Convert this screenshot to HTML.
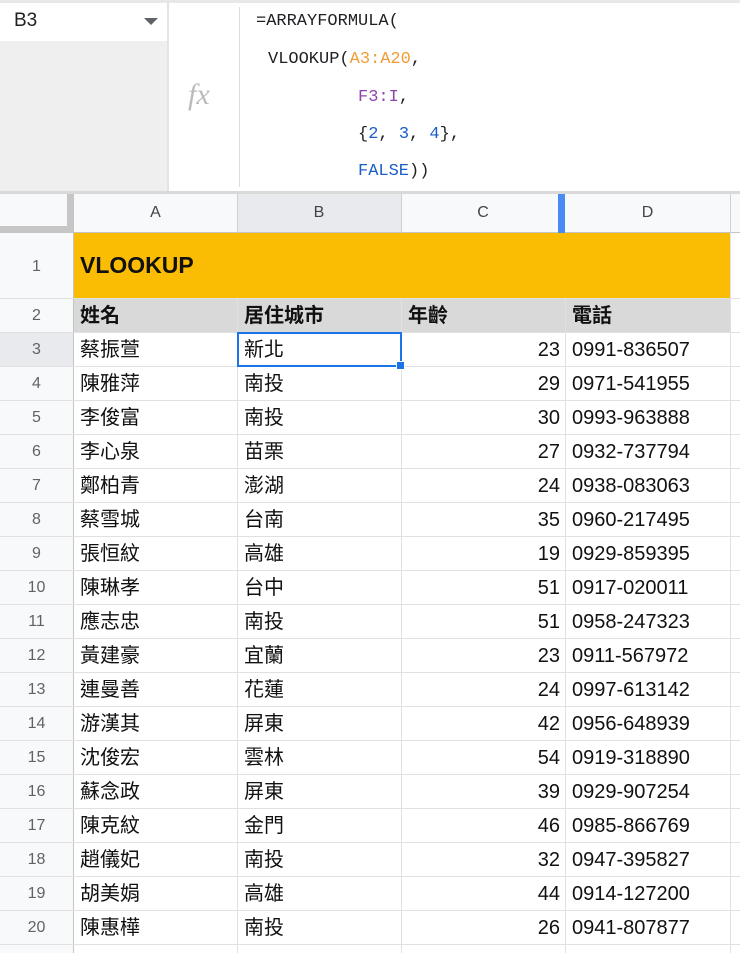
<!DOCTYPE html>
<html><head><meta charset="utf-8">
<style>
*{margin:0;padding:0;box-sizing:border-box}
body{width:740px;height:953px;overflow:hidden;background:#fff;position:relative;font-family:"Liberation Sans","Noto Sans CJK TC",sans-serif;}
.a{position:absolute}
.mono{font-family:"Liberation Mono","DejaVu Sans Mono",monospace;font-size:17px;color:#202124;white-space:pre}
.hl{position:absolute;left:0;width:740px;height:1px;background:#e1e1e1}
.vl{position:absolute;top:233px;width:1px;height:720px;background:#e1e1e1}
.rh{position:absolute;left:0;width:73px;text-align:center;font-size:16px;color:#5f6368;background:#f8f9fa;margin-top:1px}
.c{position:absolute;font-size:20px;color:#111;white-space:nowrap;line-height:36px}
</style></head><body>
<div class="a" style="left:0;top:0;width:740px;height:3px;background:#e8e8e8"></div>
<div class="a" style="left:0;top:3px;width:167px;height:188px;background:#efefef"></div>
<div class="a" style="left:0;top:3px;width:167px;height:38px;background:#fff"></div>
<div class="a" style="left:14px;top:10px;font-size:19px;color:#202124">B3</div>
<div class="a" style="left:144px;top:18px;width:0;height:0;border-left:7px solid transparent;border-right:7px solid transparent;border-top:7px solid #5f6368"></div>
<div class="a" style="left:167px;top:3px;width:2px;height:188px;background:#e3e3e3"></div>
<div class="a" style="left:188px;top:78px;font-family:'Liberation Serif',serif;font-style:italic;font-size:30px;color:#bbb">fx</div>
<div class="a" style="left:239px;top:7px;width:1px;height:180px;background:#ddd"></div>
<div class="a mono" style="left:256px;top:12px">=ARRAYFORMULA(</div>
<div class="a mono" style="left:268px;top:50px">VLOOKUP(<span style="color:#f29d38">A3:A20</span>,</div>
<div class="a mono" style="left:358px;top:88px"><span style="color:#8e44ad">F3:I</span>,</div>
<div class="a mono" style="left:358px;top:125px">{<span style="color:#1a5fc7">2</span>, <span style="color:#1a5fc7">3</span>, <span style="color:#1a5fc7">4</span>},</div>
<div class="a mono" style="left:358px;top:162px"><span style="color:#1a5fc7">FALSE</span>))</div>
<div class="a" style="left:0;top:191px;width:740px;height:3px;background:#d9d9d9"></div>
<div class="a" style="left:0;top:194px;width:740px;height:39px;background:#f8f9fa"></div>
<div class="a" style="left:237px;top:194px;width:164px;height:39px;background:#e8eaed"></div>
<div class="a" style="left:67px;top:194px;width:7px;height:39px;background:#c6c6c6"></div>
<div class="a" style="left:0;top:226px;width:74px;height:7px;background:#c6c6c6"></div>
<div class="a" style="left:74px;top:232px;width:666px;height:1px;background:#c4c4c4"></div>
<div class="a" style="left:237px;top:194px;width:1px;height:39px;background:#d0d0d0"></div>
<div class="a" style="left:401px;top:194px;width:1px;height:39px;background:#d0d0d0"></div>
<div class="a" style="left:558px;top:194px;width:7px;height:39px;background:#4a8af4"></div>
<div class="a" style="left:730px;top:194px;width:1px;height:39px;background:#d0d0d0"></div>
<div class="a" style="left:74px;top:204px;width:163px;text-align:center;font-size:16px;color:#444">A</div>
<div class="a" style="left:237px;top:204px;width:164px;text-align:center;font-size:16px;color:#444">B</div>
<div class="a" style="left:401px;top:204px;width:164px;text-align:center;font-size:16px;color:#444">C</div>
<div class="a" style="left:565px;top:204px;width:165px;text-align:center;font-size:16px;color:#444">D</div>
<div class="a" style="left:0;top:233px;width:73px;height:720px;background:#f8f9fa"></div>
<div class="a" style="left:0;top:332px;width:73px;height:34px;background:#e8eaed"></div>
<div class="a" style="left:73px;top:233px;width:1px;height:720px;background:#c4c4c4"></div>
<div class="a" style="left:74px;top:233px;width:656px;height:65px;background:#fbbc04"></div>
<div class="a" style="left:80px;top:252px;font-size:23px;font-weight:bold;color:#111">VLOOKUP</div>
<div class="rh" style="top:257px">1</div>
<div class="a" style="left:74px;top:298px;width:656px;height:34px;background:#d9d9d9"></div>
<div class="rh" style="top:306px;background:none">2</div>
<div class="c" style="left:80px;top:298px;font-weight:bold">姓名</div>
<div class="c" style="left:244px;top:298px;font-weight:bold">居住城市</div>
<div class="c" style="left:408px;top:298px;font-weight:bold">年齡</div>
<div class="c" style="left:572px;top:298px;font-weight:bold">電話</div>
<div class="vl" style="left:237px;top:298px;height:655px"></div>
<div class="vl" style="left:401px;top:298px;height:655px"></div>
<div class="vl" style="left:565px;top:298px;height:655px"></div>
<div class="vl" style="left:730px"></div>
<div class="hl" style="top:298px"></div>
<div class="hl" style="top:332px"></div>
<div class="hl" style="top:366px"></div><div class="hl" style="top:400px"></div><div class="hl" style="top:434px"></div>
<div class="hl" style="top:468px"></div><div class="hl" style="top:502px"></div><div class="hl" style="top:536px"></div>
<div class="hl" style="top:570px"></div><div class="hl" style="top:604px"></div><div class="hl" style="top:638px"></div>
<div class="hl" style="top:672px"></div><div class="hl" style="top:706px"></div><div class="hl" style="top:740px"></div>
<div class="hl" style="top:774px"></div><div class="hl" style="top:808px"></div><div class="hl" style="top:842px"></div>
<div class="hl" style="top:876px"></div><div class="hl" style="top:910px"></div><div class="hl" style="top:944px"></div>

<div class="rh" style="top:340px;background:none">3</div><div class="c" style="left:80px;top:332px">蔡振萱</div><div class="c" style="left:244px;top:332px">新北</div><div class="c" style="right:180px;top:332px">23</div><div class="c" style="left:572px;top:332px">0991-836507</div>
<div class="rh" style="top:374px">4</div><div class="c" style="left:80px;top:366px">陳雅萍</div><div class="c" style="left:244px;top:366px">南投</div><div class="c" style="right:180px;top:366px">29</div><div class="c" style="left:572px;top:366px">0971-541955</div>
<div class="rh" style="top:408px">5</div><div class="c" style="left:80px;top:400px">李俊富</div><div class="c" style="left:244px;top:400px">南投</div><div class="c" style="right:180px;top:400px">30</div><div class="c" style="left:572px;top:400px">0993-963888</div>
<div class="rh" style="top:442px">6</div><div class="c" style="left:80px;top:434px">李心泉</div><div class="c" style="left:244px;top:434px">苗栗</div><div class="c" style="right:180px;top:434px">27</div><div class="c" style="left:572px;top:434px">0932-737794</div>
<div class="rh" style="top:476px">7</div><div class="c" style="left:80px;top:468px">鄭柏青</div><div class="c" style="left:244px;top:468px">澎湖</div><div class="c" style="right:180px;top:468px">24</div><div class="c" style="left:572px;top:468px">0938-083063</div>
<div class="rh" style="top:510px">8</div><div class="c" style="left:80px;top:502px">蔡雪城</div><div class="c" style="left:244px;top:502px">台南</div><div class="c" style="right:180px;top:502px">35</div><div class="c" style="left:572px;top:502px">0960-217495</div>
<div class="rh" style="top:544px">9</div><div class="c" style="left:80px;top:536px">張恒紋</div><div class="c" style="left:244px;top:536px">高雄</div><div class="c" style="right:180px;top:536px">19</div><div class="c" style="left:572px;top:536px">0929-859395</div>
<div class="rh" style="top:578px">10</div><div class="c" style="left:80px;top:570px">陳琳孝</div><div class="c" style="left:244px;top:570px">台中</div><div class="c" style="right:180px;top:570px">51</div><div class="c" style="left:572px;top:570px">0917-020011</div>
<div class="rh" style="top:612px">11</div><div class="c" style="left:80px;top:604px">應志忠</div><div class="c" style="left:244px;top:604px">南投</div><div class="c" style="right:180px;top:604px">51</div><div class="c" style="left:572px;top:604px">0958-247323</div>
<div class="rh" style="top:646px">12</div><div class="c" style="left:80px;top:638px">黃建豪</div><div class="c" style="left:244px;top:638px">宜蘭</div><div class="c" style="right:180px;top:638px">23</div><div class="c" style="left:572px;top:638px">0911-567972</div>
<div class="rh" style="top:680px">13</div><div class="c" style="left:80px;top:672px">連曼善</div><div class="c" style="left:244px;top:672px">花蓮</div><div class="c" style="right:180px;top:672px">24</div><div class="c" style="left:572px;top:672px">0997-613142</div>
<div class="rh" style="top:714px">14</div><div class="c" style="left:80px;top:706px">游漢其</div><div class="c" style="left:244px;top:706px">屏東</div><div class="c" style="right:180px;top:706px">42</div><div class="c" style="left:572px;top:706px">0956-648939</div>
<div class="rh" style="top:748px">15</div><div class="c" style="left:80px;top:740px">沈俊宏</div><div class="c" style="left:244px;top:740px">雲林</div><div class="c" style="right:180px;top:740px">54</div><div class="c" style="left:572px;top:740px">0919-318890</div>
<div class="rh" style="top:782px">16</div><div class="c" style="left:80px;top:774px">蘇念政</div><div class="c" style="left:244px;top:774px">屏東</div><div class="c" style="right:180px;top:774px">39</div><div class="c" style="left:572px;top:774px">0929-907254</div>
<div class="rh" style="top:816px">17</div><div class="c" style="left:80px;top:808px">陳克紋</div><div class="c" style="left:244px;top:808px">金門</div><div class="c" style="right:180px;top:808px">46</div><div class="c" style="left:572px;top:808px">0985-866769</div>
<div class="rh" style="top:850px">18</div><div class="c" style="left:80px;top:842px">趙儀妃</div><div class="c" style="left:244px;top:842px">南投</div><div class="c" style="right:180px;top:842px">32</div><div class="c" style="left:572px;top:842px">0947-395827</div>
<div class="rh" style="top:884px">19</div><div class="c" style="left:80px;top:876px">胡美娟</div><div class="c" style="left:244px;top:876px">高雄</div><div class="c" style="right:180px;top:876px">44</div><div class="c" style="left:572px;top:876px">0914-127200</div>
<div class="rh" style="top:918px">20</div><div class="c" style="left:80px;top:910px">陳惠樺</div><div class="c" style="left:244px;top:910px">南投</div><div class="c" style="right:180px;top:910px">26</div><div class="c" style="left:572px;top:910px">0941-807877</div>
<div class="a" style="left:237px;top:332px;width:165px;height:35px;border:2px solid #1a73e8"></div>
<div class="a" style="left:396px;top:361px;width:9px;height:9px;background:#1a73e8;border:1px solid #fff"></div>
</body></html>
